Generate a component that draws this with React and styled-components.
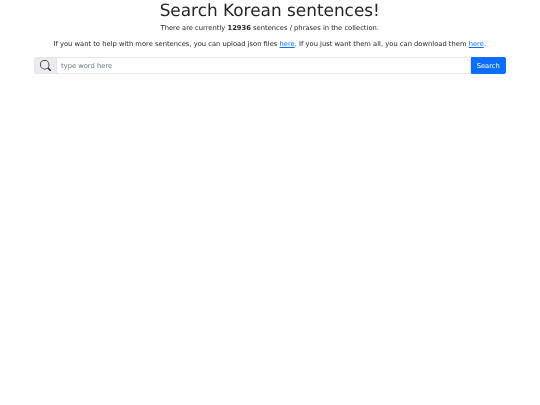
import React from "react";
import styled, { createGlobalStyle } from "styled-components";

const Global = createGlobalStyle`
  html, body { margin: 0; padding: 0; background: #fff; }
  body { font-family: "DejaVu Sans", sans-serif; color: #212529; text-rendering: geometricPrecision; }
`;
const Page = styled.main`
  width: 471.5px;
  margin: 0 auto;
  text-align: center;
  will-change: transform;
`;
const Title = styled.h1`
  margin: 0;
  font-size: 16.9px;
  line-height: 20px;
  font-weight: 400;
`;
const Line = styled.p`
  margin: 0;
  font-size: 6.75px;
  line-height: 10px;
  padding-top: ${p => p.$top}px;
  white-space: nowrap;
`;
const Link = styled.a`
  color: #0d6efd;
  text-decoration: underline;
`;
const SearchGroup = styled.form`
  display: flex;
  height: 17px;
  margin-top: 8px;
`;
const IconBox = styled.span`
  width: 22px;
  display: flex;
  align-items: center;
  justify-content: center;
  background: #e9ecef;
  border: 1px solid #e4e7ea;
  border-right: 0;
  border-radius: 3px 0 0 3px;
  box-sizing: border-box;
`;
const Input = styled.input`
  flex: 1;
  min-width: 0;
  box-sizing: border-box;
  border: 1px solid #e4e7ea;
  padding: 0 4px;
  font: 6.75px "DejaVu Sans", sans-serif;
  color: #212529;
  outline: none;
  &::placeholder { color: #6c757d; opacity: 1; }
`;
const Button = styled.button`
  width: 34.5px;
  box-sizing: border-box;
  border: 1px solid #0d6efd;
  background: #0d6efd;
  color: #fff;
  border-radius: 0 2px 2px 0;
  padding: 0;
  font: 6.75px "DejaVu Sans", sans-serif;
`;

export default function App() {
  return (
    <>
      <Global />
      <Page>
        <Title>Search Korean sentences!</Title>
        <Line $top={3}>There are currently <b>12936</b> sentences / phrases in the collection.</Line>
        <Line $top={6}>
          If you want to help with more sentences, you can upload json files <Link href="#">here</Link>. If you just want them all, you can download them <Link href="#">here</Link>.
        </Line>
        <SearchGroup onSubmit={e => e.preventDefault()}>
          <IconBox>
            <svg width="11.5" height="11.5" viewBox="0 0 16 16" fill="#212529">
              <path d="M11.742 10.344a6.5 6.5 0 1 0-1.397 1.398h-.001l3.85 3.85a1 1 0 0 0 1.415-1.414l-3.85-3.85zM12 6.5a5.5 5.5 0 1 1-11 0 5.5 5.5 0 0 1 11 0z" />
            </svg>
          </IconBox>
          <Input placeholder="type word here" />
          <Button type="submit">Search</Button>
        </SearchGroup>
      </Page>
    </>
  );
}
